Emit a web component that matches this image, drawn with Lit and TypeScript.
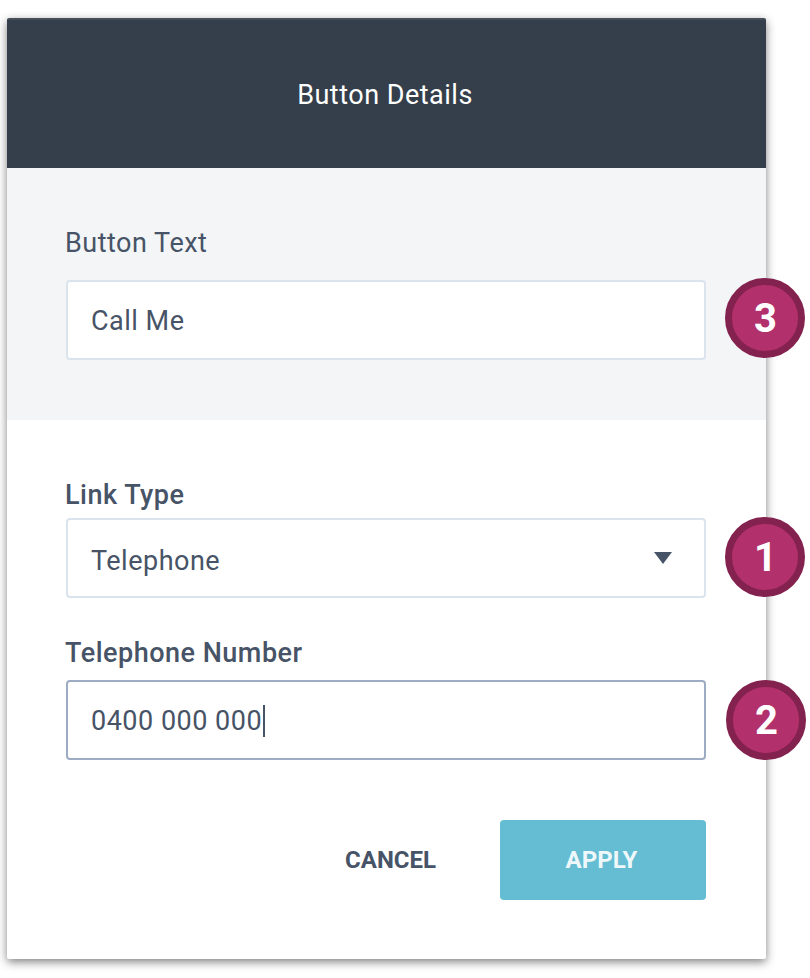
import { LitElement, html, css } from "lit";
import { customElement } from "lit/decorators.js";

@customElement("app-root")
export class AppRoot extends LitElement {
  static styles = css`
    :host {
      display: block;
      width: 810px;
      height: 978px;
      box-sizing: border-box;
      padding: 18px 0 0 7px;
      background: #fff;
      font-family: Roboto, "Liberation Sans", sans-serif;
      color: #475366;
      overflow: hidden;
    }
    .card {
      width: 759px;
      background: #fff;
      border-radius: 2px;
      box-shadow: 0 3px 10px rgba(0, 0, 0, 0.5);
    }
    .head {
      height: 150px;
      box-sizing: border-box;
      border-top: 2px solid #454e59;
      border-radius: 2px 2px 0 0;
      background: #353f4b;
      color: #fff;
      display: flex;
      align-items: center;
      justify-content: center;
      font-size: 27px;
      letter-spacing: 0.5px;
      padding: 2px 3px 0 0;
    }
    .gray {
      background: #f3f5f7;
      height: 252px;
      box-sizing: border-box;
      padding: 58px 60px 0 59px;
    }
    .white {
      padding: 58px 60px 59px 59px;
      display: flex;
      flex-direction: column;
    }
    .label {
      font-size: 27px;
      line-height: 34px;
      height: 34px;
      letter-spacing: 0.5px;
      margin: 0 0 20px -1px;
    }
    .label.bold {
      font-weight: 500;
      margin-bottom: 6px;
    }
    .label.wide {
      margin-bottom: 10px;
    }
    .gap {
      height: 38px;
    }
    .field {
      position: relative;
      height: 80px;
      width: 640px;
      box-sizing: border-box;
      background: #fff;
      border: 2px solid #dbe3ec;
      border-radius: 4px;
      padding: 2px 23px 0;
      display: flex;
      align-items: center;
      justify-content: space-between;
      font-size: 27px;
      letter-spacing: 0.5px;
    }
    .field.select {
      padding-top: 6px;
    }
    .field.focus {
      border-color: #9dacc2;
    }
    .value {
      display: inline-flex;
      align-items: center;
    }
    .caret {
      display: inline-block;
      width: 2px;
      height: 32px;
      background: #475366;
      margin-left: 1px;
    }
    .arrow {
      width: 18px;
      height: 12px;
      margin: -6px 9px 0 0;
      display: block;
    }
    .badge {
      position: absolute;
      top: -4px;
      left: 657px;
      width: 80px;
      height: 80px;
      box-sizing: border-box;
      border-radius: 50%;
      background: #b2306c;
      border: 7px solid #84224f;
      color: #fff;
      font-size: 40px;
      font-weight: 700;
      letter-spacing: 0;
      display: flex;
      align-items: center;
      justify-content: center;
      padding: 1px 0 0 1px;
    }
    .badge.one {
      top: -3px;
    }
    .badge.two {
      top: -2px;
      left: 658px;
    }
    .actions {
      display: flex;
      justify-content: flex-end;
      align-items: center;
      margin-top: 60px;
    }
    .cancel {
      font-size: 24px;
      font-weight: 700;
      color: #475366;
      margin-right: 64px;
    }
    .apply {
      width: 206px;
      height: 80px;
      box-sizing: border-box;
      padding-right: 3px;
      border-radius: 4px;
      background: #64bdd3;
      color: #eef8fa;
      font-size: 24px;
      font-weight: 700;
      display: flex;
      align-items: center;
      justify-content: center;
    }
  `;

  render() {
    return html`
      <div class="card">
        <div class="head">Button Details</div>
        <div class="gray">
          <div class="label">Button Text</div>
          <div class="field">
            <span class="value">Call Me</span>
            <span class="badge">3</span>
          </div>
        </div>
        <div class="white">
          <div class="label bold">Link Type</div>
          <div class="field select">
            <span class="value">Telephone</span>
            <svg class="arrow" viewBox="0 0 18 12"><path d="M0 0H18L9 12Z" fill="#475366"></path></svg>
            <span class="badge one">1</span>
          </div>
          <div class="gap"></div>
          <div class="label bold wide">Telephone Number</div>
          <div class="field focus">
            <span class="value">0400 000 000<i class="caret"></i></span>
            <span class="badge two">2</span>
          </div>
          <div class="actions">
            <span class="cancel">CANCEL</span>
            <span class="apply">APPLY</span>
          </div>
        </div>
      </div>
    `;
  }
}
